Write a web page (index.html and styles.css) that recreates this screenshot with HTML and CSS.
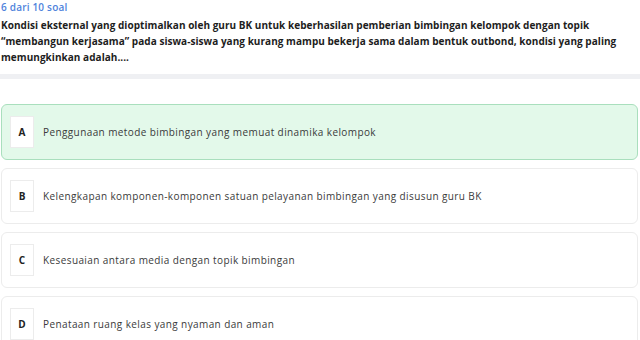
FILE: index.html
```html
<!DOCTYPE html>
<html lang="id">

<head>
    <meta charset="UTF-8">
    <meta name="viewport" content="width=device-width, initial-scale=1.0">
    <title>Soal 6</title>
    <link rel="stylesheet" href="styles.css">
</head>

<body>
    <div class="question">
        <div class="counter">6 dari 10 soal</div>
        <p class="question-text">Kondisi eksternal yang dioptimalkan oleh guru BK untuk keberhasilan pemberian bimbingan kelompok dengan topik “membangun kerjasama” pada siswa-siswa yang kurang mampu bekerja sama dalam bentuk outbond, kondisi yang paling memungkinkan adalah....</p>
    </div>

    <div class="options">
        <div class="option selected">
            <span class="letter">A</span>
            <span class="option-text">Penggunaan metode bimbingan yang memuat dinamika kelompok</span>
        </div>
        <div class="option">
            <span class="letter">B</span>
            <span class="option-text">Kelengkapan komponen-komponen satuan pelayanan bimbingan yang disusun guru BK</span>
        </div>
        <div class="option">
            <span class="letter">C</span>
            <span class="option-text">Kesesuaian antara media dengan topik bimbingan</span>
        </div>
        <div class="option">
            <span class="letter">D</span>
            <span class="option-text">Penataan ruang kelas yang nyaman dan aman</span>
        </div>
    </div>
</body>

</html>
```

FILE: styles.css
```css
body {
    margin: 0;
    font-family: "Open Sans", "Noto Sans", sans-serif;
    background-color: #fff;
    color: #222;
}

.question {
    padding: 1px 1px 9px 1px;
    border-bottom: 5px solid #eff0f3;
}

.counter {
    color: #4f83dc;
    font-size: 10px;
    font-weight: 600;
    letter-spacing: 0.2px;
    line-height: 13px;
}

.question-text {
    margin: 3px 0 0 0;
    font-size: 10px;
    font-weight: 700;
    letter-spacing: 0.04px;
    line-height: 16px;
    color: #1d1d1d;
}

.options {
    display: flex;
    flex-direction: column;
    gap: 8px;
    padding: 25px 2px 0 1px;
}

.option {
    display: flex;
    align-items: center;
    gap: 9px;
    height: 54px;
    padding: 0 8px;
    border: 1px solid #ececec;
    border-radius: 6px;
    background-color: #fff;
}

.option.selected {
    background-color: #e3f9ea;
    border-color: #a9dfbd;
}

.letter {
    display: flex;
    align-items: center;
    justify-content: center;
    flex-shrink: 0;
    width: 24px;
    height: 32px;
    box-sizing: border-box;
    border: 1px solid #ececec;
    background-color: #fff;
    font-size: 10px;
    font-weight: 700;
    color: #222;
}

.option-text {
    font-size: 10px;
    letter-spacing: 0.4px;
    color: #3a3a3a;
}
```
